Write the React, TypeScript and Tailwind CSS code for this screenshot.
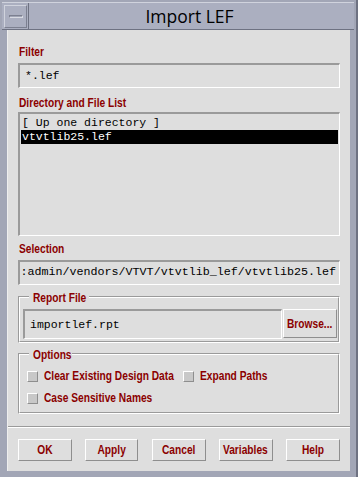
import React from "react";

const labelFont = { fontFamily: '"Liberation Sans", Arial, sans-serif' };
const monoFont = { fontFamily: '"Liberation Mono", "DejaVu Sans Mono", monospace' };

function Narrow({ children, center }: { children: React.ReactNode; center?: boolean }) {
  return (
    <span
      className={
        "inline-block whitespace-nowrap scale-x-[0.85] text-[12px] leading-[14px] font-bold text-[#8b0000] " +
        (center ? "origin-center" : "origin-left")
      }
      style={labelFont}
    >
      {children}
    </span>
  );
}

function Label({ children }: { children: React.ReactNode }) {
  return (
    <div className="h-[14px] leading-[14px] pl-[1px]">
      <Narrow>{children}</Narrow>
    </div>
  );
}

function Sunken({ className, children }: { className?: string; children?: React.ReactNode }) {
  return (
    <div
      className={
        "border-t-2 border-l-2 border-b border-r border-t-[#9a9a9a] border-l-[#9a9a9a] border-b-white border-r-white bg-[#dedede] " +
        (className ?? "")
      }
    >
      {children}
    </div>
  );
}

function Button({ children, className }: { children: React.ReactNode; className?: string }) {
  return (
    <div
      className={
        "flex items-center justify-center border border-t-white border-l-white border-b-[#8e8e8e] border-r-[#8e8e8e] bg-[#dedede] " +
        (className ?? "")
      }
    >
      <Narrow center>{children}</Narrow>
    </div>
  );
}

function Check({ label }: { label: string }) {
  return (
    <div className="flex items-center gap-[6px]">
      <div className="w-[11px] h-[11px] shrink-0 border border-t-white border-l-white border-b-[#8e8e8e] border-r-[#8e8e8e] bg-[#c8c8c8]" />
      <Narrow>{label}</Narrow>
    </div>
  );
}

export default function App() {
  return (
    <div className="w-[358px] h-[477px] bg-[#a2a6b6] flex flex-col pt-[2px] pb-[6px] pl-[2px] pr-[2px] border-r-2 border-r-[#6e7282]">
      {/* Title bar */}
      <div className="h-[28px] flex bg-[#abafc0] border-b border-[#6e7282] border-t border-t-[#d0d3dd]">
        <div className="w-[27px] flex items-center justify-center border-r border-r-[#6e7282] pl-[1px]">
          <div className="w-[23px] h-[23px] border border-t-[#d0d3dd] border-l-[#d0d3dd] border-b-[#7c8090] border-r-[#7c8090] flex items-center justify-center">
            <div className="w-[14px] h-[3px] bg-[#a0a4b4] border border-t-[#7c8090] border-l-[#7c8090] border-b-[#d8dae2] border-r-[#d8dae2]" />
          </div>
        </div>
        <div
          className="flex-1 flex items-center justify-center text-[17.5px] text-black pr-[4px]"
          style={{ fontFamily: '"Open Sans", "Noto Sans", sans-serif' }}
        >
          Import LEF
        </div>
      </div>

      {/* Body */}
      <div className="flex-1 ml-[5px] mr-[4px] bg-[#dedede] border-l border-l-[#eeeeee] flex flex-col pl-[10px] pr-[10px] pt-[13px]">
        <Label>Filter</Label>
        <Sunken className="mt-[6px] h-[25px] flex items-center pl-[5px]">
          <span className="text-[11.5px] text-black" style={monoFont}>*.lef</span>
        </Sunken>

        <div className="mt-[6px]">
          <Label>Directory and File List</Label>
        </div>
        <Sunken className="mt-[4px] h-[124px] pt-[2px] pl-[1px] pr-[1px]">
          <div className="h-[14px] leading-[14px] text-[11.5px] text-black pl-[1px]" style={monoFont}>
            [ Up one directory ]
          </div>
          <div className="h-[14px] leading-[14px] text-[11.5px] bg-black text-white pl-[1px]" style={monoFont}>
            vtvtlib25.lef
          </div>
        </Sunken>

        <div className="mt-[4px]">
          <Label>Selection</Label>
        </div>
        <Sunken className="mt-[6px] h-[25px] flex items-center justify-end pr-[3px] overflow-hidden whitespace-nowrap">
          <span className="text-[11.7px] text-black" style={monoFont}>
            :admin/vendors/VTVT/vtvtlib_lef/vtvtlib25.lef
          </span>
        </Sunken>

        {/* Report File group */}
        <div className="relative mt-[11px] h-[47px] border border-t-[#9a9a9a] border-l-[#9a9a9a] border-b-white border-r-white">
          <div className="absolute inset-0 border border-t-white border-l-white border-b-[#9a9a9a] border-r-[#9a9a9a] pointer-events-none" />
          <div className="absolute left-[10px] top-[-8px] pl-[3px] w-[60px] bg-[#dedede]">
            <Label>Report File</Label>
          </div>
          <div className="flex pl-[4px] pr-[2px] pt-[12px] gap-[1px]">
            <Sunken className="flex-1 h-[30px] flex items-center pl-[5px]">
              <span className="text-[11.5px] text-black" style={monoFont}>importlef.rpt</span>
            </Sunken>
            <Button className="w-[54px] h-[29px]">Browse...</Button>
          </div>
        </div>

        {/* Options group */}
        <div className="relative mt-[10px] h-[61px] border border-t-[#9a9a9a] border-l-[#9a9a9a] border-b-white border-r-white">
          <div className="absolute inset-0 border border-t-white border-l-white border-b-[#9a9a9a] border-r-[#9a9a9a] pointer-events-none" />
          <div className="absolute left-[10px] top-[-8px] pl-[3px] w-[43px] bg-[#dedede]">
            <Label>Options</Label>
          </div>
          <div className="pl-[8px] pt-[15px] flex flex-col gap-[8px]">
            <div className="flex">
              <div className="w-[156px]">
                <Check label="Clear Existing Design Data" />
              </div>
              <Check label="Expand Paths" />
            </div>
            <Check label="Case Sensitive Names" />
          </div>
        </div>

        <div className="mt-[12px] -mx-[10px] h-[2px] border-t border-t-[#9a9a9a] border-b border-b-white" />

        <div className="mt-[11px] flex justify-between">
          <Button className="w-[54px] h-[22px]">OK</Button>
          <Button className="w-[53px] h-[22px]">Apply</Button>
          <Button className="w-[54px] h-[22px]">Cancel</Button>
          <Button className="w-[54px] h-[22px]">Variables</Button>
          <Button className="w-[54px] h-[22px]">Help</Button>
        </div>
      </div>
    </div>
  );
}
